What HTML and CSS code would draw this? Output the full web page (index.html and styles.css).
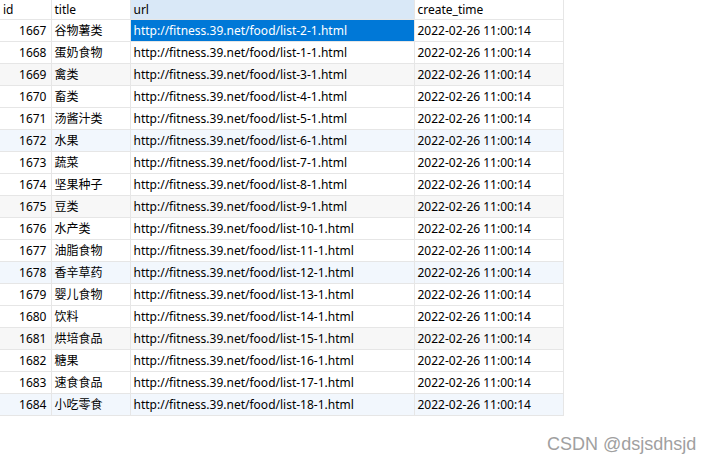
FILE: index.html
```html
<!DOCTYPE html>
<html>
<head>
<meta charset="utf-8">
<link rel="stylesheet" href="styles.css">
</head>
<body>
<table class="grid">
  <colgroup>
    <col class="c-id"><col class="c-title"><col class="c-url"><col class="c-time">
  </colgroup>
  <thead>
    <tr><th>id</th><th>title</th><th class="sel-col">url</th><th>create_time</th></tr>
  </thead>
  <tbody>
    <tr><td class="num">1667</td><td>谷物薯类</td><td class="sel">http://fitness.39.net/food/list-2-1.html</td><td>2022-02-26 11:00:14</td></tr>
    <tr><td class="num">1668</td><td>蛋奶食物</td><td>http://fitness.39.net/food/list-1-1.html</td><td>2022-02-26 11:00:14</td></tr>
    <tr class="gray"><td class="num">1669</td><td>禽类</td><td>http://fitness.39.net/food/list-3-1.html</td><td>2022-02-26 11:00:14</td></tr>
    <tr><td class="num">1670</td><td>畜类</td><td>http://fitness.39.net/food/list-4-1.html</td><td>2022-02-26 11:00:14</td></tr>
    <tr><td class="num">1671</td><td>汤酱汁类</td><td>http://fitness.39.net/food/list-5-1.html</td><td>2022-02-26 11:00:14</td></tr>
    <tr class="blue"><td class="num">1672</td><td>水果</td><td>http://fitness.39.net/food/list-6-1.html</td><td>2022-02-26 11:00:14</td></tr>
    <tr><td class="num">1673</td><td>蔬菜</td><td>http://fitness.39.net/food/list-7-1.html</td><td>2022-02-26 11:00:14</td></tr>
    <tr><td class="num">1674</td><td>坚果种子</td><td>http://fitness.39.net/food/list-8-1.html</td><td>2022-02-26 11:00:14</td></tr>
    <tr class="gray"><td class="num">1675</td><td>豆类</td><td>http://fitness.39.net/food/list-9-1.html</td><td>2022-02-26 11:00:14</td></tr>
    <tr><td class="num">1676</td><td>水产类</td><td>http://fitness.39.net/food/list-10-1.html</td><td>2022-02-26 11:00:14</td></tr>
    <tr><td class="num">1677</td><td>油脂食物</td><td>http://fitness.39.net/food/list-11-1.html</td><td>2022-02-26 11:00:14</td></tr>
    <tr class="blue"><td class="num">1678</td><td>香辛草药</td><td>http://fitness.39.net/food/list-12-1.html</td><td>2022-02-26 11:00:14</td></tr>
    <tr><td class="num">1679</td><td>婴儿食物</td><td>http://fitness.39.net/food/list-13-1.html</td><td>2022-02-26 11:00:14</td></tr>
    <tr><td class="num">1680</td><td>饮料</td><td>http://fitness.39.net/food/list-14-1.html</td><td>2022-02-26 11:00:14</td></tr>
    <tr class="gray"><td class="num">1681</td><td>烘培食品</td><td>http://fitness.39.net/food/list-15-1.html</td><td>2022-02-26 11:00:14</td></tr>
    <tr><td class="num">1682</td><td>糖果</td><td>http://fitness.39.net/food/list-16-1.html</td><td>2022-02-26 11:00:14</td></tr>
    <tr><td class="num">1683</td><td>速食食品</td><td>http://fitness.39.net/food/list-17-1.html</td><td>2022-02-26 11:00:14</td></tr>
    <tr class="blue"><td class="num">1684</td><td>小吃零食</td><td>http://fitness.39.net/food/list-18-1.html</td><td>2022-02-26 11:00:14</td></tr>
  </tbody>
</table>
<div class="watermark">CSDN @dsjsdhsjd</div>
</body>
</html>
```
FILE: styles.css
```css
html, body {
  margin: 0;
  padding: 0;
  background: #ffffff;
}
body {
  width: 714px;
  height: 463px;
  position: relative;
  overflow: hidden;
  font-family: "Noto Sans", "Noto Sans CJK SC", sans-serif;
  font-size: 12px;
  color: #000;
}
.grid {
  border-collapse: collapse;
  table-layout: fixed;
  width: 563px;
}
.c-id { width: 51px; }
.c-title { width: 79px; }
.c-url { width: 284px; }
.c-time { width: 149px; }
.grid th, .grid td {
  border-right: 1px solid #e6e6e6;
  border-bottom: 1px solid #e6e6e6;
  padding: 0 3px;
  white-space: nowrap;
  overflow: hidden;
  text-align: left;
  font-weight: normal;
  line-height: 16px;
}
.grid th {
  height: 19px;
  padding-top: 0;
  padding-bottom: 0;
  vertical-align: middle;
}
.grid td {
  height: 21px;
  vertical-align: middle;
}
.grid td.num {
  text-align: right;
  padding-right: 4px;
}
.sel-col {
  background: #d9e8f7;
}
.grid td.sel {
  background: #0078d7;
  color: #ffffff;
}
.gray td { background: #f7f7f7; }
.blue td { background: #f2f7fd; }
.watermark {
  position: absolute;
  left: 547px;
  top: 434px;
  font-family: "Liberation Sans", Arial, sans-serif;
  font-size: 18px;
  line-height: 20px;
  color: #a0a0a0;
}
```
